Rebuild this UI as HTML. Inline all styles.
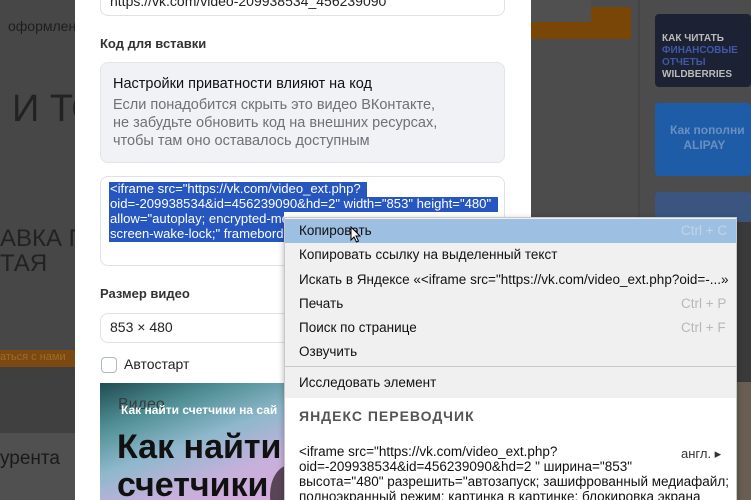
<!DOCTYPE html>
<html style="width:751px;height:500px;overflow:hidden"><head><meta charset="utf-8"><style>
*{margin:0;padding:0;box-sizing:border-box}
body{width:751px;height:500px;overflow:hidden;position:relative;background:#4a4a4a;font-family:"Liberation Sans","DejaVu Sans",sans-serif}
.a{position:absolute}
.t{white-space:nowrap}
</style></head><body>
<div class="a" style="left:0;top:0;width:75px;height:500px;background:#474747"></div>
<div class="a t" style="left:8px;top:18px;font-size:14px;color:#1e1e1e">оформлен</div>
<div class="a t" style="left:12px;top:88px;font-size:38px;color:#222">И ТО</div>
<div class="a t" style="left:0;top:225px;font-size:24px;color:#222">АВКА Г</div>
<div class="a t" style="left:0;top:250px;font-size:24px;color:#222">ТАЯ</div>
<div class="a" style="left:0;top:350px;width:75px;height:17px;background:#7a4a10"></div>
<div class="a t" style="left:0;top:351px;font-size:11px;color:#a06a30">аться с нами</div>
<div class="a" style="left:0;top:367px;width:75px;height:12px;background:#3f3f3f"></div>
<div class="a" style="left:0;top:379px;width:75px;height:54px;background:#404040"></div>
<div class="a" style="left:0;top:433px;width:75px;height:67px;background:#505050"></div>
<div class="a t" style="left:0;top:448px;font-size:19px;color:#1a1a1a">урента</div>

<div class="a" style="left:531px;top:0;width:220px;height:500px;background:#4c4c4c"></div>
<div class="a" style="left:638px;top:0;width:2px;height:500px;background:#454545"></div>
<div class="a" style="left:531px;top:7px;width:100px;height:32px;background:#7a4608;border-radius:3px"></div>
<div class="a" style="left:531px;top:0;width:60px;height:22px;background:#505050"></div>
<div class="a" style="left:655px;top:14px;width:96px;height:73px;background:#1c2233;border-radius:4px"></div>
<div class="a" style="left:662px;top:33px;font-size:10px;font-weight:bold;color:#bbb;line-height:12px">КАК ЧИТАТЬ<br><span style="color:#3f58a8">ФИНАНСОВЫЕ ОТЧЕТЫ</span><br>WILDBERRIES</div>
<div class="a" style="left:655px;top:103px;width:96px;height:73px;background:#1e5ca8;border-radius:4px"></div>
<div class="a t" style="left:670px;top:123px;font-size:12px;font-weight:bold;color:#6a8fc0;line-height:15px">Как пополни<br>&nbsp;&nbsp;&nbsp;&nbsp;ALIPAY</div>
<div class="a" style="left:655px;top:192px;width:96px;height:30px;background:#3a5580;border-radius:4px"></div>
<div class="a" style="left:737px;top:222px;width:14px;height:160px;background:#3a3a3a"></div>
<div class="a" style="left:737px;top:382px;width:14px;height:118px;background:#6a5e52"></div>

<div class="a" style="left:75px;top:0;width:456px;height:500px;background:#fff"></div>
<div class="a" style="left:100px;top:-10px;width:405px;height:26px;border:1px solid #dfe1e5;border-radius:8px"></div>
<div class="a t" style="left:110px;top:-7px;font-size:14px;color:#222">https://vk.com/video-209938534_456239090</div>
<div class="a t" style="left:100px;top:36px;font-size:13px;font-weight:bold;color:#333">Код для вставки</div>
<div class="a" style="left:100px;top:62px;width:405px;height:101px;background:#f0f2f5;border:1px solid #e3e5e8;border-radius:8px"></div>
<div class="a t" style="left:113px;top:76px;font-size:14.5px;color:#111;font-weight:500">Настройки приватности влияют на код</div>
<div class="a t" style="left:113px;top:96px;font-size:14.5px;color:#6d7178;line-height:18px">Если понадобится скрыть это видео ВКонтакте,<br>не забудьте обновить код на внешних ресурсах,<br>чтобы там оно оставалось доступным</div>
<div class="a" style="left:100px;top:176px;width:405px;height:90px;border:1px solid #dfe1e5;border-radius:8px"></div>
<div class="a" style="left:109px;top:182px;width:258px;height:15px;background:#2656c0"></div>
<div class="a" style="left:109px;top:197px;width:389px;height:15px;background:#2656c0"></div>
<div class="a" style="left:109px;top:212px;width:175px;height:15px;background:#2656c0"></div>
<div class="a" style="left:109px;top:227px;width:175px;height:15px;background:#2656c0"></div>
<div class="a t" style="left:110px;top:181px;font-size:13.1px;color:#fff;line-height:15px">&lt;iframe src="https://vk.com/video_ext.php?<br>oid=-209938534&amp;id=456239090&amp;hd=2" width="853" height="480"<br>allow="autoplay; encrypted-me<br>screen-wake-lock;" framebord</div>
<div class="a t" style="left:100px;top:286px;font-size:13px;font-weight:bold;color:#333">Размер видео</div>
<div class="a" style="left:100px;top:313px;width:200px;height:30px;border:1px solid #dfe1e5;border-radius:8px"></div>
<div class="a t" style="left:110px;top:319px;font-size:14px;color:#222">853 × 480</div>
<div class="a" style="left:101px;top:357px;width:16px;height:16px;border:1.5px solid #aeb7c2;border-radius:4px"></div>
<div class="a t" style="left:124px;top:356px;font-size:14px;color:#222">Автостарт</div>
<div class="a" style="left:100px;top:383px;width:185px;height:117px;overflow:hidden;background:linear-gradient(160deg,#1f4c52 0%,#4f8f94 25%,#8fb8cc 50%,#c7b0dc 75%,#d6a8dc 100%)">
<div class="a" style="left:170px;top:82px;width:40px;height:60px;border-radius:50%;background:#5a4558"></div>
</div>
<div class="a t" style="left:118px;top:396px;font-size:16px;color:#3a3a3a">Видео</div>
<div class="a t" style="left:121px;top:403px;font-size:12px;font-weight:bold;color:#fff">Как найти счетчики на сай</div>
<div class="a t" style="left:117px;top:428px;font-size:34px;font-weight:bold;color:#111;line-height:38px">Как найти<br>счетчики</div>

<div class="a" style="left:284px;top:217px;width:453px;height:283px;background:#f0f0f0;border:1px solid #c8c8c8;border-bottom:none;box-shadow:0 2px 6px rgba(0,0,0,.3);overflow:hidden"></div>
<div class="a" style="left:285px;top:219px;width:451px;height:24px;background:#9dbfe2"></div>
<div class="a" style="left:285px;top:366px;width:451px;height:1px;background:#c9c9c9"></div>
<div class="a" style="left:285px;top:398px;width:451px;height:102px;background:#fff"></div>
<div class="a t" style="left:299px;top:219px;font-size:13.5px;color:#111;line-height:24.3px">Копировать<br>Копировать ссылку на выделенный текст<br>Искать в Яндексе «&lt;iframe src="https://vk.com/video_ext.php?oid=-...»<br>Печать<br>Поиск по странице<br>Озвучить</div>
<div class="a t" style="left:681px;top:219px;font-size:13.5px;color:#b8b8b8;line-height:24.3px"><span style="color:#c0d4ea">Ctrl + C</span><br><br><br>Ctrl + P<br>Ctrl + F</div>
<svg class="a" style="left:350px;top:226px" width="12" height="18" viewBox="0 0 12 18"><path d="M1 1 L1 14 L4 11 L6.5 16 L8.5 15 L6 10 L10 10 Z" fill="#fff" stroke="#000" stroke-width="1"/></svg>
<div class="a t" style="left:299px;top:375px;font-size:13.5px;color:#111">Исследовать элемент</div>
<div class="a t" style="left:299px;top:408px;font-size:14px;font-weight:bold;color:#555;letter-spacing:1px">ЯНДЕКС ПЕРЕВОДЧИК</div>
<div class="a t" style="left:299px;top:444px;font-size:13.5px;color:#111;line-height:15px">&lt;iframe src="https://vk.com/video_ext.php?<br>oid=-209938534&amp;id=456239090&amp;hd=2 " ширина="853"<br>высота="480" разрешить="автозапуск; зашифрованный медиафайл;<br>полноэкранный режим; картинка в картинке; блокировка экрана</div>
<div class="a t" style="left:681px;top:446px;font-size:13px;color:#333">англ. ▸</div>
</body></html>
